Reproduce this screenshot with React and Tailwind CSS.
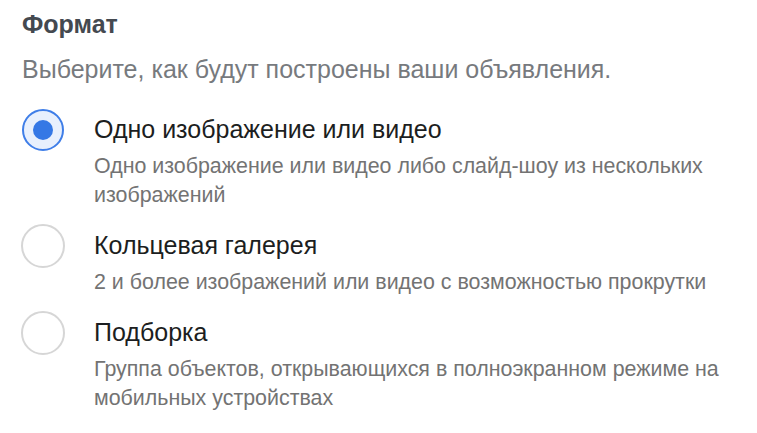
import React, { useState } from 'react';

const options = [
  {
    id: 'single',
    title: 'Одно изображение или видео',
    description: 'Одно изображение или видео либо слайд-шоу из нескольких изображений',
  },
  {
    id: 'carousel',
    title: 'Кольцевая галерея',
    description: '2 и более изображений или видео с возможностью прокрутки',
  },
  {
    id: 'collection',
    title: 'Подборка',
    description: 'Группа объектов, открывающихся в полноэкранном режиме на мобильных устройствах',
  },
];

const Radio = ({ checked }) => (
  <div className="w-11 h-11 shrink-0 flex items-center justify-center">
    {checked ? (
      <div className="w-[42px] h-[42px] rounded-full border-2 border-[#3f7ee8] bg-[#e8f0fd] flex items-center justify-center">
        <div className="w-[20px] h-[20px] rounded-full bg-[#3578e5]" />
      </div>
    ) : (
      <div className="w-11 h-11 rounded-full border-2 border-[#d6d6d6] bg-white" />
    )}
  </div>
);

const App = () => {
  const [format, setFormat] = useState('single');

  return (
    <div
      className="w-[757px] h-[433px] bg-white pl-[21px] pr-[22px] pt-[9px] overflow-hidden"
      style={{ fontFamily: '"Liberation Sans", Arial, sans-serif' }}
    >
      <h2 className="text-[25px] leading-[30px] font-bold text-[#444950] pl-px">Формат</h2>
      <p className="mt-[15px] text-[25px] leading-[30px] text-[#777a7e] pl-px">
        Выберите, как будут построены ваши объявления.
      </p>

      <div className="mt-[24px] flex flex-col gap-[14px]">
        {options.map((opt) => (
          <div
            key={opt.id}
            className="flex items-start gap-[29px] cursor-pointer"
            onClick={() => setFormat(opt.id)}
          >
            <Radio checked={format === opt.id} />
            <div className="pt-[6px] flex-1">
              <div className="text-[25px] leading-[30px] text-[#1c1e21]">{opt.title}</div>
              <div className="mt-[8px] text-[21.4px] leading-[29px] text-[#737373]">{opt.description}</div>
            </div>
          </div>
        ))}
      </div>
    </div>
  );
};

export default App;
